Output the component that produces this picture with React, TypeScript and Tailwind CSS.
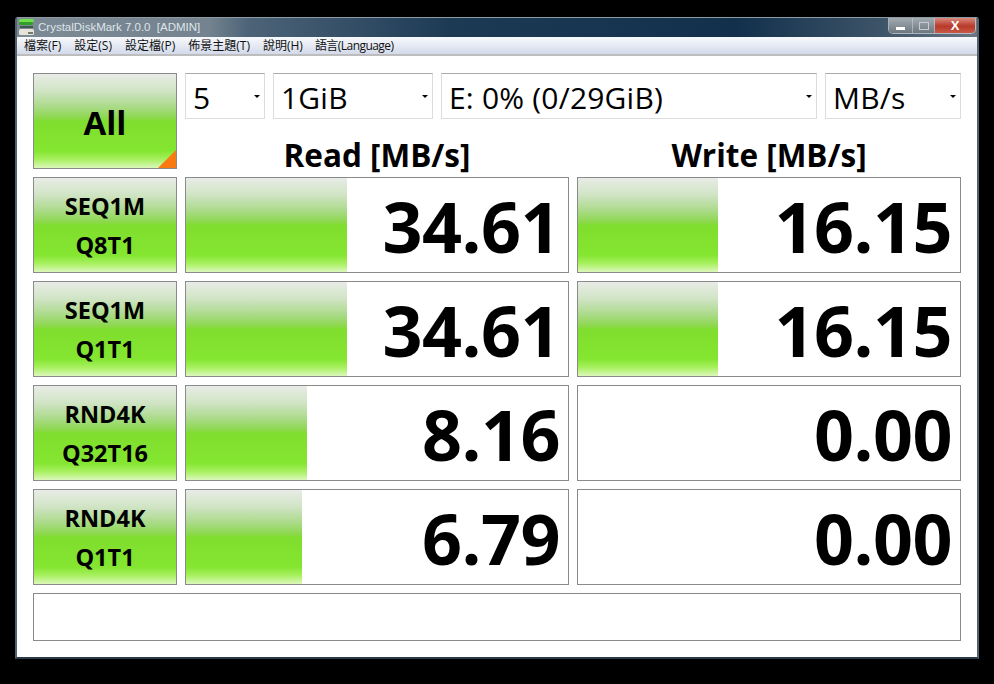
const rows = [
  { a: "SEQ1M", b: "Q8T1", read: "34.61", readBar: 161, write: "16.15", writeBar: 140 },
  { a: "SEQ1M", b: "Q1T1", read: "34.61", readBar: 161, write: "16.15", writeBar: 140 },
  { a: "RND4K", b: "Q32T16", read: "8.16", readBar: 121, write: "0.00", writeBar: 0 },
  { a: "RND4K", b: "Q1T1", read: "6.79", readBar: 116, write: "0.00", writeBar: 0 },
];

const menus = ["檔案(F)", "設定(S)", "設定檔(P)", "佈景主題(T)", "說明(H)"];

const green =
  "bg-[linear-gradient(to_bottom,#e8ece6_0%,#d0e4c4_18%,#acdb8c_34%,#8cd84c_47%,#80de2e_50%,#84e630_82%,#a8f060_91%,#dcf8bc_100%)]";

function Combo({ label, width }: { label: string; width: string }) {
  return (
    <div
      className={`${width} flex h-[46px] items-center justify-between border border-[#dcdcdc] border-t-[#ababab] pl-[7px] pr-[3px] text-[30px] leading-none tracking-[0.2px] text-black`}
    >
      <span className="pt-[3px]">{label}</span>
      <span className="mr-[1px] h-0 w-0 border-x-[3px] border-t-[3px] border-x-transparent border-t-black" />
    </div>
  );
}

function Meter({ value, bar }: { value: string; bar: number }) {
  return (
    <div className="relative flex h-[96px] items-center justify-end border border-[#8a8a8a] bg-white">
      {bar > 0 && <div className={`absolute inset-y-0 left-0 ${green}`} style={{ width: bar }} />}
      <span className="relative pr-[8px] pt-[1px] text-[70px] font-bold leading-none tracking-[-0.5px] text-black">
        {value}
      </span>
    </div>
  );
}

function DriveIcon() {
  return (
    <svg width="17" height="17" viewBox="0 0 17 17" className="shrink-0">
      <rect x="1" y="0" width="15" height="3" rx="1.5" fill="#6fe04a" />
      <rect x="1" y="3" width="14" height="3" rx="1.5" fill="#2f9f2a" />
      <rect x="2" y="7" width="13" height="2" fill="#3f5a4a" />
      <rect x="1" y="10" width="15" height="6" rx="1.5" fill="#e4e4da" />
      <rect x="10" y="13" width="5" height="2" fill="#77776c" />
    </svg>
  );
}

export default function App() {
  return (
    <div
      className="h-[684px] w-[994px] overflow-hidden bg-black pl-[15px] pt-[17px]"
      style={{ fontFamily: '"Open Sans", "Noto Sans CJK TC", sans-serif' }}
    >
      <div className="w-[964px] rounded-t-[3px] border-x-2 border-b-2 border-x-[#54616e] border-b-[#2b3a48] border-t border-t-[#8d99a3] bg-white">
        <div className="flex h-[19px] items-start justify-between bg-[linear-gradient(to_right,#7c8a96_0%,#74838f_20%,#4d6478_24%,#1d3a55_45%,#12304c_75%,#3d5468_90%,#6b7884_100%)] pl-[1px]">
          <div className="flex items-center gap-[3px]">
            <DriveIcon />
            <span
              className="text-[11.5px] leading-[18px] text-[#dfe5ea]"
              style={{ fontFamily: '"Liberation Sans", sans-serif' }}
            >
              CrystalDiskMark 7.0.0&nbsp;&nbsp;[ADMIN]
            </span>
          </div>
          <div className="mr-[1px] flex h-[16px] w-[88px] overflow-hidden rounded-b-[5px] border-x border-b border-[#d5dbe0]/70">
            <div className="flex w-[24px] items-end justify-center border-r border-[#c9d0d6]/60 bg-[linear-gradient(to_bottom,#a3abb2,#6d7780)] pb-[3px]">
              <div className="h-[3px] w-[9px] bg-white" />
            </div>
            <div className="flex w-[22px] items-center justify-center border-r border-[#c9d0d6]/60 bg-[linear-gradient(to_bottom,#a3abb2,#6d7780)]">
              <div className="h-[8px] w-[10px] border border-[#c5ccd2]" />
            </div>
            <div
              className="flex flex-1 items-center justify-center bg-[linear-gradient(to_bottom,#d98a7c,#b8392a_55%,#c95a46)] text-[13px] font-bold leading-none text-white"
              style={{ fontFamily: '"Liberation Sans", sans-serif' }}
            >
              X
            </div>
          </div>
        </div>

        <div className="flex h-[19px] items-center gap-[13px] border-b-2 border-[#bdbdbd] bg-[linear-gradient(to_bottom,#f7f9fc,#d3daea)] pl-[7px] text-[12px] leading-none text-[#111]">
          {menus.map((m) => (
            <span key={m}>{m}</span>
          ))}
          <span className="-ml-[1px] tracking-[-0.55px]">語言(Language)</span>
        </div>

        <div className="grid grid-cols-[144px_384px_384px] gap-2 pb-[16px] pl-[16px] pt-[17px]">
          <div
            className={`relative flex h-[96px] items-center justify-center overflow-hidden border border-[#8a8a8a] pt-[2px] text-[33px] font-bold leading-none text-black ${green}`}
          >
            All
            <div className="absolute bottom-0 right-0 h-0 w-0 border-b-[18px] border-l-[18px] border-b-[#f97a10] border-l-transparent" />
          </div>

          <div className="col-span-2 flex flex-col">
            <div className="flex gap-2">
              <Combo label="5" width="w-[80px]" />
              <Combo label="1GiB" width="w-[160px]" />
              <Combo label="E: 0% (0/29GiB)" width="w-[376px]" />
              <Combo label="MB/s" width="w-[136px]" />
            </div>
            <div className="grid flex-1 grid-cols-2 gap-2 text-center text-[31.5px] font-bold leading-[72px] text-black">
              <div className="h-[50px]">Read [MB/s]</div>
              <div className="h-[50px]">Write [MB/s]</div>
            </div>
          </div>

          {rows.map((r, i) => (
            <div key={i} className="contents">
              <div
                className={`flex h-[96px] flex-col items-center justify-center gap-[11px] border border-[#8a8a8a] pt-[1px] text-[23.5px] font-bold leading-[28px] text-black ${green}`}
              >
                <span>{r.a}</span>
                <span>{r.b}</span>
              </div>
              <Meter value={r.read} bar={r.readBar} />
              <Meter value={r.write} bar={r.writeBar} />
            </div>
          ))}

          <div className="col-span-3 h-[48px] w-[928px] border border-[#8a8a8a]" />
        </div>
      </div>
    </div>
  );
}
